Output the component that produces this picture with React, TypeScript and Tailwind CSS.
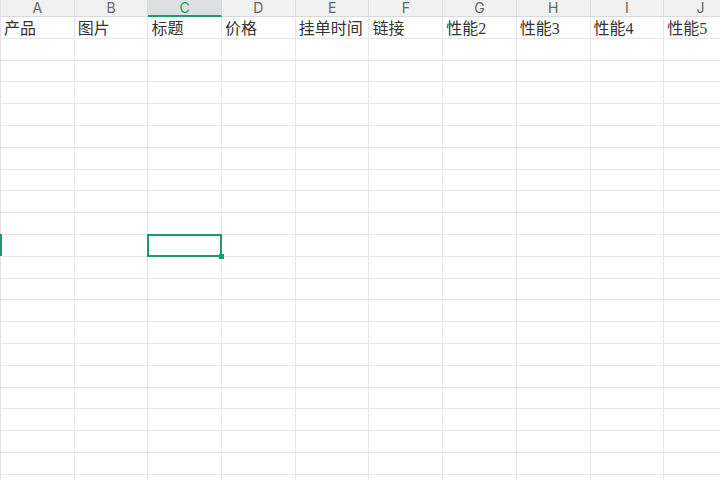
import React from "react";

const cols = ["A", "B", "C", "D", "E", "F", "G", "H", "I", "J"];
const row1 = ["产品", "图片", "标题", "价格", "挂单时间", "链接", "性能2", "性能3", "性能4", "性能5"];
const ROWS = 22;

export default function App() {
  return (
    <div className="w-[720px] h-[480px] overflow-hidden bg-white relative">
      <div className="border-l border-[#e3e3e3] w-[740px]">
        {/* column header */}
        <div className="grid grid-cols-[repeat(10,73.7px)] h-[17px]">
          {cols.map((c, i) => (
            <div
              key={c}
              className={
                "flex items-start justify-center leading-[15px] text-[14px] border-r " +
                (i === 2
                  ? "bg-[#dedfe1] text-[#1f9a6c] border-b-2 border-b-[#1f9a6c] border-r-[#d6d6d6]"
                  : "bg-[#f1f1f1] text-[#666] border-b border-b-[#dadada] border-r-[#dcdcdc]")
              }
              style={{ fontFamily: "Inter, 'Noto Sans', sans-serif" }}
            >
              {c}
            </div>
          ))}
        </div>
        {/* body */}
        {Array.from({ length: ROWS }).map((_, r) => (
          <div key={r} className="grid grid-cols-[repeat(10,73.7px)] h-[21.8px]">
            {cols.map((c, i) => (
              <div
                key={c}
                className={
                  "relative border-r border-b border-[#e6e6e6] flex items-end px-[3px] pb-[1px] text-[16px] leading-none text-[#333] whitespace-nowrap" +
                  (r === 10 && i === 2 ? " z-10" : "")
                }
                style={{ fontFamily: "'Liberation Serif', 'Noto Sans CJK SC', serif" }}
              >
                {r === 0 ? row1[i] : ""}
                {r === 10 && i === 2 && (
                  <div className="absolute left-[-1px] top-[-1px] right-[-1px] bottom-[-1px] border-2 border-[#1f9a6c]">
                    <div className="absolute right-[-4px] bottom-[-4px] w-[5px] h-[5px] bg-[#1f9a6c]" />
                  </div>
                )}
              </div>
            ))}
          </div>
        ))}
      </div>
      {/* row header selection indicator at left edge */}
      <div className="absolute left-0 top-[234px] w-[2px] h-[22px] bg-[#1f9a6c]" />
    </div>
  );
}
